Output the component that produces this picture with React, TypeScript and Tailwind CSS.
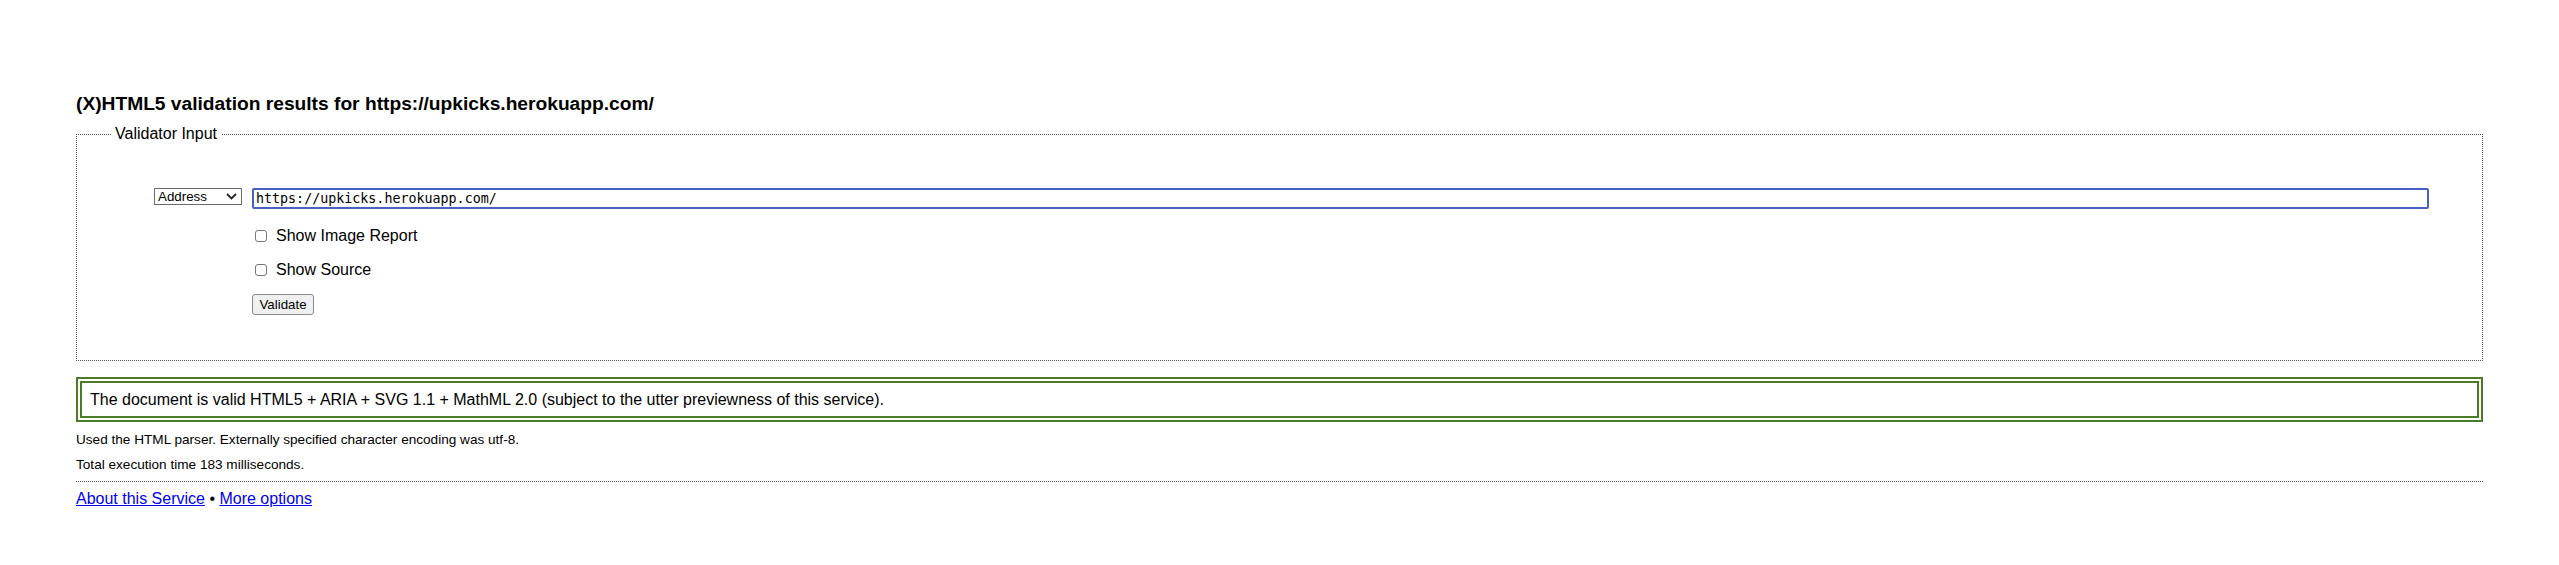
export default function App() {
  return (
    <div className="min-h-[565px] bg-white px-[76px] pt-[92px] text-black font-['Liberation_Sans',Arial,sans-serif]">
      <h2 className="text-[19.2px] font-bold leading-[23px]">
        (X)HTML5 validation results for https://upkicks.herokuapp.com/
      </h2>

      {/* Validator input */}
      <fieldset className="mt-[10px] border border-dotted border-[#555] pl-[34px] pr-[53px] pb-[45px]">
        <legend className="px-[4px] text-[16px] leading-[18px]">Validator Input</legend>

        <div className="mt-[45px] flex items-start gap-[10px] pl-[43px]">
          <div className="flex h-[17px] w-[88px] items-center justify-between border border-[#6b6b6b] bg-white pl-[3px] pr-[3px] text-[13.33px] leading-none">
            <span>Address</span>
            <svg width="11" height="7" viewBox="0 0 11 7" className="mr-[1px]">
              <polyline points="1,1 5.5,5.5 10,1" fill="none" stroke="#222" strokeWidth="1.8" />
            </svg>
          </div>
          <div className="flex h-[21px] flex-1 items-center rounded-[2px] border-2 border-[#4661c2] pl-[2px] text-[13.33px] font-['DejaVu_Sans_Mono',Menlo,monospace]">
            https://upkicks.herokuapp.com/
          </div>
        </div>

        <label className="mt-[16px] flex h-[22px] items-center pl-[141px] text-[16px]">
          <span className="ml-[3px] mr-[9px] h-[12px] w-[12px] rounded-[3px] border border-[#767676] bg-white" />
          Show Image Report
        </label>
        <label className="mt-[12px] flex h-[22px] items-center pl-[141px] text-[16px]">
          <span className="ml-[3px] mr-[9px] h-[12px] w-[12px] rounded-[3px] border border-[#767676] bg-white" />
          Show Source
        </label>

        <div className="mt-[13px] pl-[141px]">
          <button className="flex h-[21px] w-[62px] items-center justify-center rounded-[3px] border border-[#8a8a8a] bg-[#f0f0f0] text-[13.33px] leading-none">
            Validate
          </button>
        </div>
      </fieldset>

      <div className="mt-[16px] border-[6px] border-double border-[#4a7c26] px-[8px] py-[7px] text-[16px] leading-[19px]">
        The document is valid HTML5 + ARIA + SVG 1.1 + MathML 2.0 (subject to the utter previewness of this service).
      </div>

      <p className="mt-[10px] text-[13.6px] leading-[15px]">
        Used the HTML parser. Externally specified character encoding was utf-8.
      </p>
      <p className="mt-[10px] text-[13.6px] leading-[15px]">Total execution time 183 milliseconds.</p>

      <hr className="mt-[9px] border-0 border-t border-dotted border-[#555]" />

      <p className="mt-[8px] text-[16px] leading-[18px]">
        <a href="#" className="text-[#0000ee] underline">About this Service</a>
        {" • "}
        <a href="#" className="text-[#0000ee] underline">More options</a>
      </p>
    </div>
  );
}
